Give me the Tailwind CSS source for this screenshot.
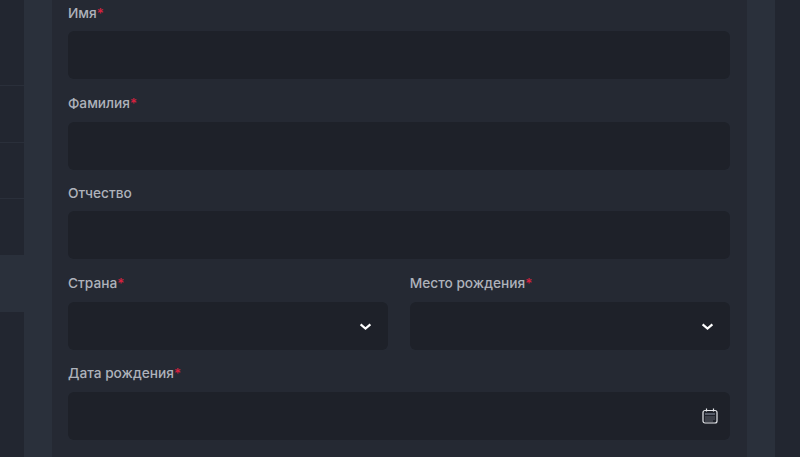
<!DOCTYPE html>
<html lang="ru">
<head>
    <meta charset="UTF-8">
    <script src="https://cdn.jsdelivr.net/npm/@tailwindcss/browser@4"></script>
    <title>Profile</title>
</head>
<body class="bg-[#272c37] h-[457px] overflow-hidden font-['Inter',sans-serif] antialiased">
    <div class="flex h-[457px] overflow-hidden">
        <!-- sidebar menu -->
        <div class="w-[24px] shrink-0 bg-[#222630] flex flex-col">
            <div class="h-[86px] border-b border-[#2a2f3a]"></div>
            <div class="h-[57px] border-b border-[#2a2f3a]"></div>
            <div class="h-[56px] border-b border-[#2a2f3a]"></div>
            <div class="h-[56px]"></div>
            <div class="h-[57px] bg-[#2a303b]"></div>
        </div>

        <div class="w-[28px] shrink-0 bg-[#2a303b]"></div>

        <!-- form card -->
        <div class="w-[695px] shrink-0 bg-[#252933] pl-[16px] pr-[17.5px]">
            <div class="flex flex-col text-[13.7px] font-medium leading-[17px] text-[#aeb2bb]">
                <label class="mt-[5px] mb-[9px]">Имя<span class="text-[#d9213f]">*</span></label>
                <div class="h-[48px] rounded-[6px] bg-[#1e2129]"></div>

                <label class="mt-[16px] mb-[10px]">Фамилия<span class="text-[#d9213f]">*</span></label>
                <div class="h-[48px] rounded-[6px] bg-[#1e2129]"></div>

                <label class="mt-[15px] mb-[9px]">Отчество</label>
                <div class="h-[48px] rounded-[6px] bg-[#1e2129]"></div>

                <div class="grid grid-cols-2 gap-[22px]">
                    <div>
                        <label class="block mt-[16px] mb-[10px]">Страна<span class="text-[#d9213f]">*</span></label>
                        <div class="h-[48px] rounded-[6px] bg-[#1e2129] flex items-center justify-end pr-[16px]">
                            <svg class="w-[13px] h-[13px]" viewBox="0 0 12 12" fill="none" stroke="white" stroke-width="2"><path d="M1.5 4l4.5 4 4.5-4"/></svg>
                        </div>
                    </div>
                    <div>
                        <label class="block mt-[16px] mb-[10px]">Место рождения<span class="text-[#d9213f]">*</span></label>
                        <div class="h-[48px] rounded-[6px] bg-[#1e2129] flex items-center justify-end pr-[16px]">
                            <svg class="w-[13px] h-[13px]" viewBox="0 0 12 12" fill="none" stroke="white" stroke-width="2"><path d="M1.5 4l4.5 4 4.5-4"/></svg>
                        </div>
                    </div>
                </div>

                <label class="mt-[15px] mb-[10px]">Дата рождения<span class="text-[#d9213f]">*</span></label>
                <div class="h-[48px] rounded-[6px] bg-[#1e2129] flex items-center justify-end pr-[12px]">
                    <svg class="w-[16px] h-[16px]" viewBox="0 0 16 16" fill="none" stroke="#e5e7eb" stroke-width="1.2">
                        <rect x="1" y="2.5" width="14" height="12.5" rx="2"/>
                        <path d="M4.5 0.5v3M11.5 0.5v3"/>
                        <path d="M3 6h10" stroke="#6b7280" stroke-width="1.5"/>
                        <path d="M3.5 9h9M3.5 11h9M3.5 13h7" stroke="#9ca3af" stroke-dasharray="1 1" stroke-width="1"/>
                    </svg>
                </div>
            </div>
        </div>

        <div class="w-[28px] shrink-0 bg-[#2a303b]"></div>
        <div class="flex-1 bg-[#222630]"></div>
    </div>
</body>
</html>
